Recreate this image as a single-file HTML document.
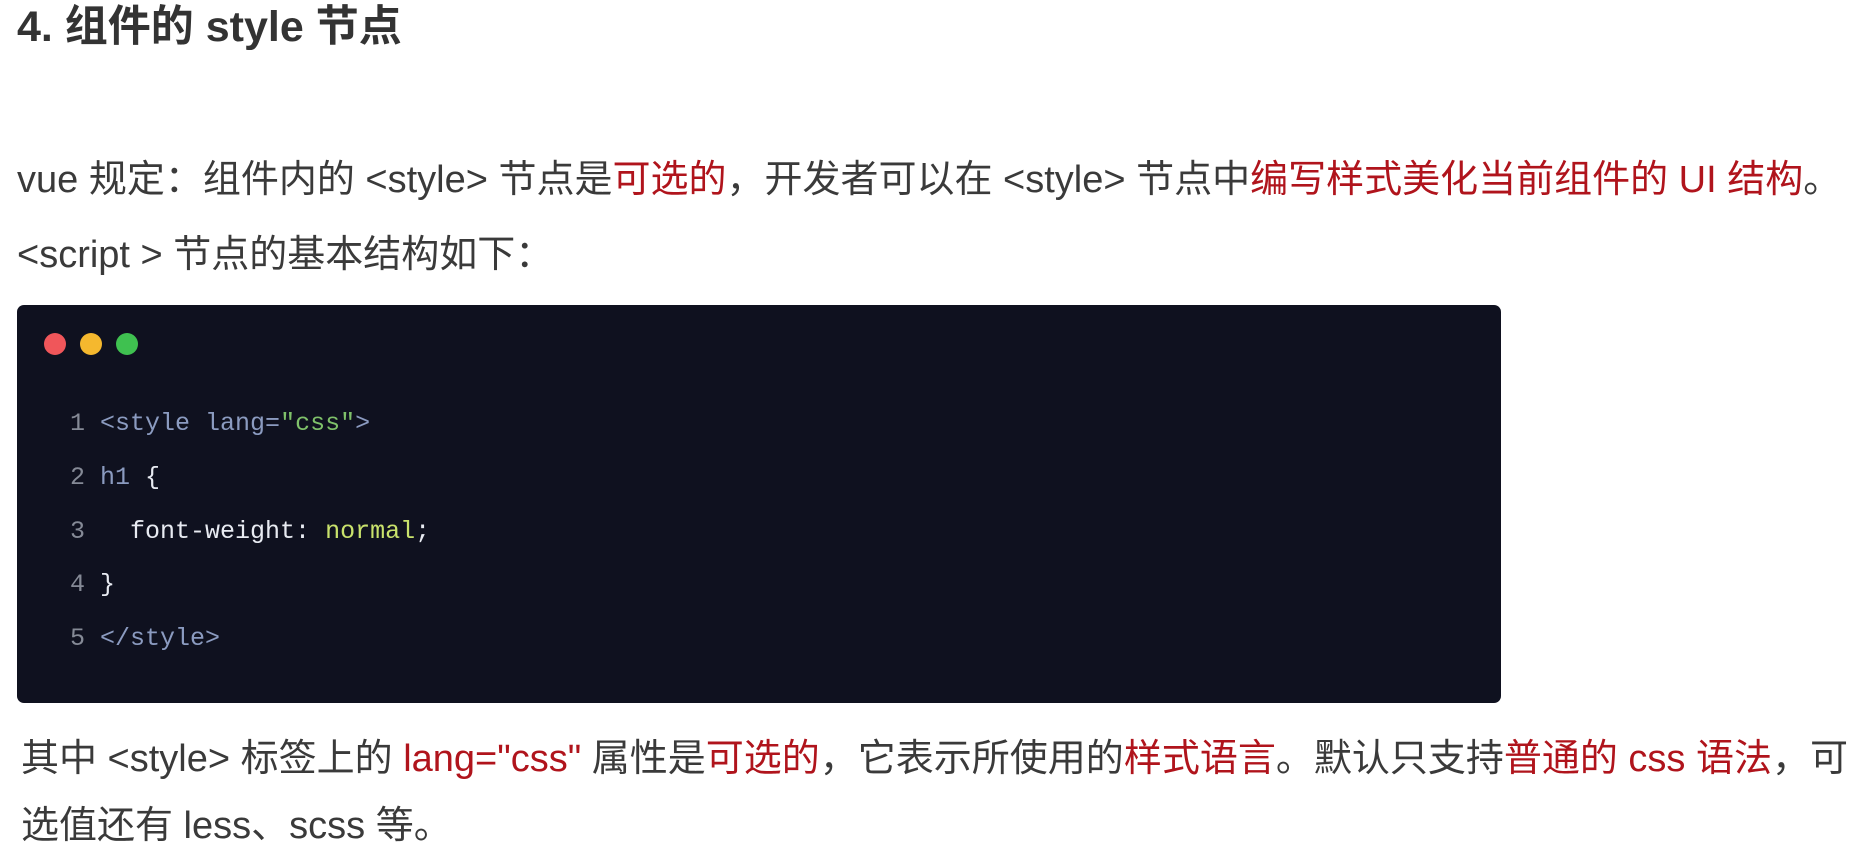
<!DOCTYPE html>
<html><head><meta charset="utf-8"><style>
body{margin:0;width:1858px;height:855px;background:#fff;overflow:hidden;position:relative;font-family:"Liberation Sans","Noto Sans CJK SC",sans-serif;color:#3a3a3a}
.t{position:absolute;white-space:nowrap;font-size:38px;line-height:44px}
.r{color:#b0141c}
h1{position:absolute;left:17px;top:2px;margin:0;font-size:43px;line-height:50px;font-weight:bold;color:#333;white-space:nowrap}
.code{position:absolute;left:17px;top:305px;width:1484px;height:398px;background:#0f111f;border-radius:7px}
.dot{position:absolute;top:333px;width:22px;height:22px;border-radius:50%}
.ln{position:absolute;font-family:"Liberation Mono",monospace;font-size:25px;line-height:30px;white-space:pre;color:#e8ebf2}
.n{color:#858a96}.tg{color:#8b9bc0}.s{color:#7fc16a}.v{color:#c9e26c}
</style></head><body>
<h1>4. 组件的 style 节点</h1>
<div class="t" style="left:17px;top:158px">vue 规定：组件内的 &lt;style&gt; 节点是<span class="r">可选的</span>，开发者可以在 &lt;style&gt; 节点中<span class="r">编写样式美化当前组件的 UI 结构</span>。</div>
<div class="t" style="left:17px;top:233px">&lt;script &gt; 节点的基本结构如下：</div>
<div class="code"></div>
<div class="dot" style="left:44px;background:#f0565a"></div>
<div class="dot" style="left:80px;background:#f5b82e"></div>
<div class="dot" style="left:116px;background:#3fc150"></div>
<div class="ln" style="left:70px;top:409px"><span class="n">1</span> <span class="tg">&lt;style lang=</span><span class="s">"css"</span><span class="tg">&gt;</span></div>
<div class="ln" style="left:70px;top:463px"><span class="n">2</span> <span class="tg">h1</span> {</div>
<div class="ln" style="left:70px;top:517px"><span class="n">3</span>   font-weight: <span class="v">normal</span>;</div>
<div class="ln" style="left:70px;top:570px"><span class="n">4</span> }</div>
<div class="ln" style="left:70px;top:624px"><span class="n">5</span> <span class="tg">&lt;/style&gt;</span></div>
<div class="t" style="left:21px;top:737px">其中 &lt;style&gt; 标签上的 <span class="r">lang="css"</span> 属性是<span class="r">可选的</span>，它表示所使用的<span class="r">样式语言</span>。默认只支持<span class="r">普通的 css 语法</span>，可</div>
<div class="t" style="left:21px;top:804px">选值还有 less、scss 等。</div>
</body></html>
